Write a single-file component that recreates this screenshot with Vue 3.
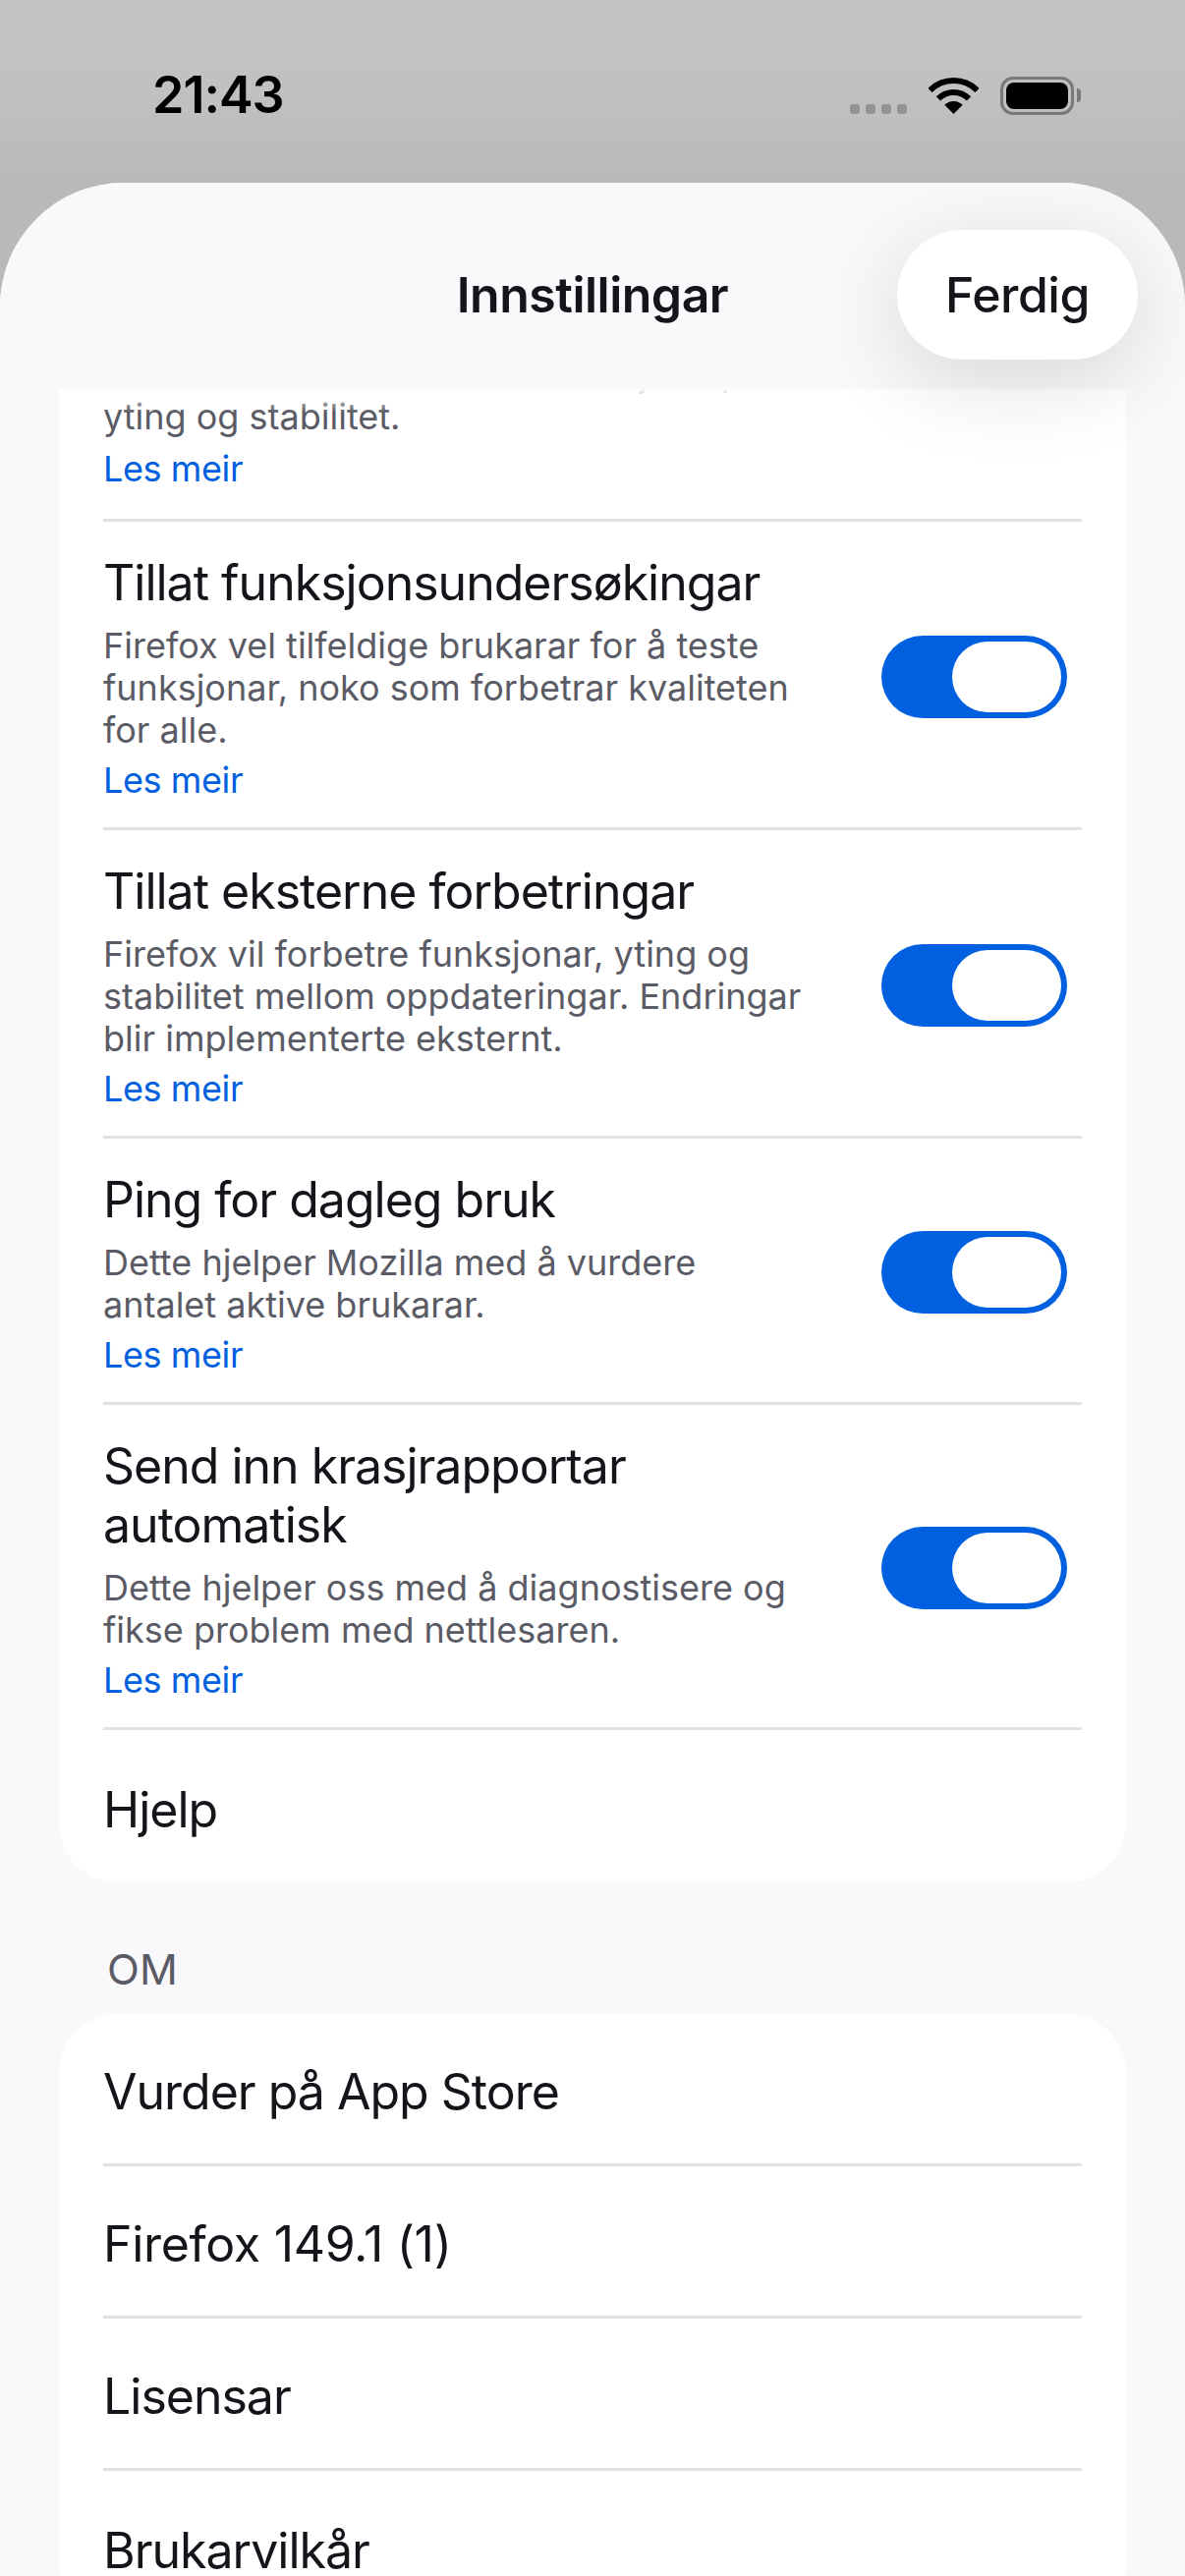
<script setup>
const privacyRows = [
  {
    desc: 'Sender data for å forbetre funksjonar, yting og stabilitet.',
    toggle: false
  },
  {
    title: 'Tillat funksjonsundersøkingar',
    desc: 'Firefox vel tilfeldige brukarar for å teste funksjonar, noko som forbetrar kvaliteten for alle.',
    toggle: true
  },
  {
    title: 'Tillat eksterne forbetringar',
    desc: 'Firefox vil forbetre funksjonar, yting og stabilitet mellom oppdateringar. Endringar blir implementerte eksternt.',
    toggle: true
  },
  {
    title: 'Ping for dagleg bruk',
    desc: 'Dette hjelper Mozilla med å vurdere antalet aktive brukarar.',
    toggle: true
  },
  {
    title: 'Send inn krasjrapportar automatisk',
    desc: 'Dette hjelper oss med å diagnostisere og fikse problem med nettlesaren.',
    toggle: true
  }
]

const aboutRows = ['Vurder på App Store', 'Firefox 149.1 (1)', 'Lisensar', 'Brukarvilkår']
</script>

<template>
  <div class="screen">
    <div class="statusbar">
      <span class="time">21:43</span>
      <div class="status-icons">
        <div class="signal">
          <i v-for="n in 4" :key="n"></i>
        </div>
        <svg class="wifi" width="51" height="37" viewBox="0 0 51 37">
          <path d="M1.5 13 A34 34 0 0 1 49.5 13" fill="none" stroke="#000" stroke-width="6" />
          <path d="M9.9 21.4 A22 22 0 0 1 41.1 21.4" fill="none" stroke="#000" stroke-width="6" />
          <path d="M25.5 37 L16.3 27.8 A13 13 0 0 1 34.7 27.8 Z" fill="#000" />
        </svg>
        <div class="battery">
          <div class="battery-level"></div>
        </div>
      </div>
    </div>

    <div class="sheet">
      <header class="sheet-header">
        <span></span>
        <h1>Innstillingar</h1>
        <button class="done">Ferdig</button>
      </header>

      <div class="sheet-body">
        <section class="card first">
          <div v-for="row in privacyRows" :key="row.desc" class="row" :class="{ scrolled: !row.title }">
            <div class="row-text">
              <div v-if="row.title" class="row-title">{{ row.title }}</div>
              <div class="row-desc">{{ row.desc }}</div>
              <a class="row-link">Les meir</a>
            </div>
            <div v-if="row.toggle" class="toggle">
              <div class="knob"></div>
            </div>
          </div>
          <div class="row plain">Hjelp</div>
        </section>

        <h2 class="section-label">OM</h2>

        <section class="card">
          <div
            v-for="item in aboutRows"
            :key="item"
            class="row plain"
            :class="{ version: item.startsWith('Firefox') }"
          >{{ item }}</div>
        </section>
      </div>
    </div>
  </div>
</template>

<style>
html,
body {
  margin: 0;
  background: #c1c1c3;
}
</style>

<style scoped>
.screen {
  width: 1206px;
  height: 2622px;
  display: flex;
  flex-direction: column;
  overflow: hidden;
  font-family: Inter, "Liberation Sans", sans-serif;
  color: #15141a;
  background: linear-gradient(#c2c2c4, #c1c1c3 90px, #b9b9bb 186px);
}

.statusbar {
  height: 186px;
  flex: none;
  box-sizing: border-box;
  padding: 68px 113px 0 155px;
  display: flex;
  justify-content: space-between;
  align-items: flex-start;
}

.time {
  font-size: 52px;
  line-height: 58px;
  font-weight: 600;
  color: #000;
  letter-spacing: -1px;
}

.status-icons {
  display: flex;
  align-items: flex-end;
  gap: 22px;
  margin-top: 10px;
}

.signal {
  display: flex;
  gap: 6px;
  margin-bottom: 1px;
}

.signal i {
  display: block;
  width: 10px;
  height: 10px;
  border-radius: 3px;
  background: #949496;
}

.wifi {
  display: block;
  margin-bottom: 1px;
}

.battery {
  position: relative;
  width: 75px;
  height: 39px;
  box-sizing: border-box;
  border: 3px solid #79797b;
  border-radius: 13px;
  padding: 3px;
}

.battery::after {
  content: "";
  position: absolute;
  right: -10px;
  top: 9px;
  width: 4px;
  height: 14px;
  border-radius: 0 4px 4px 0;
  background: #79797b;
}

.battery-level {
  height: 100%;
  border-radius: 8px;
  background: #000;
}

.sheet {
  flex: 1;
  min-height: 0;
  display: flex;
  flex-direction: column;
  background: #f9f9fb;
  border-radius: 126px 126px 0 0;
  overflow: hidden;
}

.sheet-header {
  position: relative;
  z-index: 1;
  flex: none;
  height: 210px;
  box-sizing: border-box;
  padding: 48px 48px 0;
  display: grid;
  grid-template-columns: 1fr auto 1fr;
  align-items: start;
  background: #f9f9fb;
}

.sheet-header::after {
  content: "";
  position: absolute;
  left: 60px;
  right: 60px;
  top: 100%;
  height: 24px;
  background: linear-gradient(rgba(255, 255, 255, 0.95), rgba(255, 255, 255, 0));
  pointer-events: none;
}

.sheet-header h1 {
  margin: 0;
  font-size: 50px;
  line-height: 132px;
  font-weight: 600;
  letter-spacing: -0.5px;
  color: #15141a;
}

.done {
  justify-self: end;
  position: relative;
  z-index: 2;
  width: 245px;
  height: 132px;
  padding: 0;
  border: 0;
  border-radius: 66px;
  background: #fff;
  font-family: inherit;
  font-size: 50px;
  font-weight: 500;
  letter-spacing: -0.5px;
  color: #15141a;
  box-shadow: 0 20px 90px rgba(0, 0, 0, 0.14);
}

.sheet-body {
  flex: 1;
  min-height: 0;
  overflow: hidden;
  padding: 0 60px;
}

.card {
  background: #fff;
  border-radius: 60px;
  padding: 0 45px;
}

.card.first {
  margin-top: -36px;
  border-radius: 0 0 60px 60px;
}

.row {
  display: flex;
  align-items: center;
  justify-content: space-between;
  border-bottom: 3px solid #e0e0e6;
}

.row:last-child {
  border-bottom: 0;
}

.row-text {
  width: 720px;
  padding: 32px 0 26px;
}

.row.scrolled .row-text {
  padding: 0 0 29px;
}

.row.scrolled .row-link {
  margin-top: 10px;
}

.row-title {
  font-size: 50px;
  line-height: 60px;
  letter-spacing: -1px;
  margin-bottom: 13px;
}

.row-desc {
  font-size: 36px;
  line-height: 43px;
  color: #5b5b66;
}

.row-link {
  display: block;
  margin-top: 8px;
  font-size: 36px;
  line-height: 43px;
  letter-spacing: -0.4px;
  color: #0060df;
}

.row.plain {
  height: 155px;
  box-sizing: border-box;
  padding-top: 6px;
  font-size: 50px;
  letter-spacing: -1px;
}

.row.plain.version {
  letter-spacing: -0.3px;
}

.toggle {
  flex: none;
  width: 189px;
  height: 84px;
  box-sizing: border-box;
  margin: 4px 15px 0 0;
  padding: 6px;
  display: flex;
  justify-content: flex-end;
  border-radius: 42px;
  background: #0060df;
}

.knob {
  width: 111px;
  height: 72px;
  border-radius: 36px;
  background: #fff;
}

.section-label {
  margin: 64px 0 22px;
  padding-left: 49px;
  font-size: 43px;
  line-height: 48px;
  font-weight: 400;
  color: #5b5b66;
}
</style>
